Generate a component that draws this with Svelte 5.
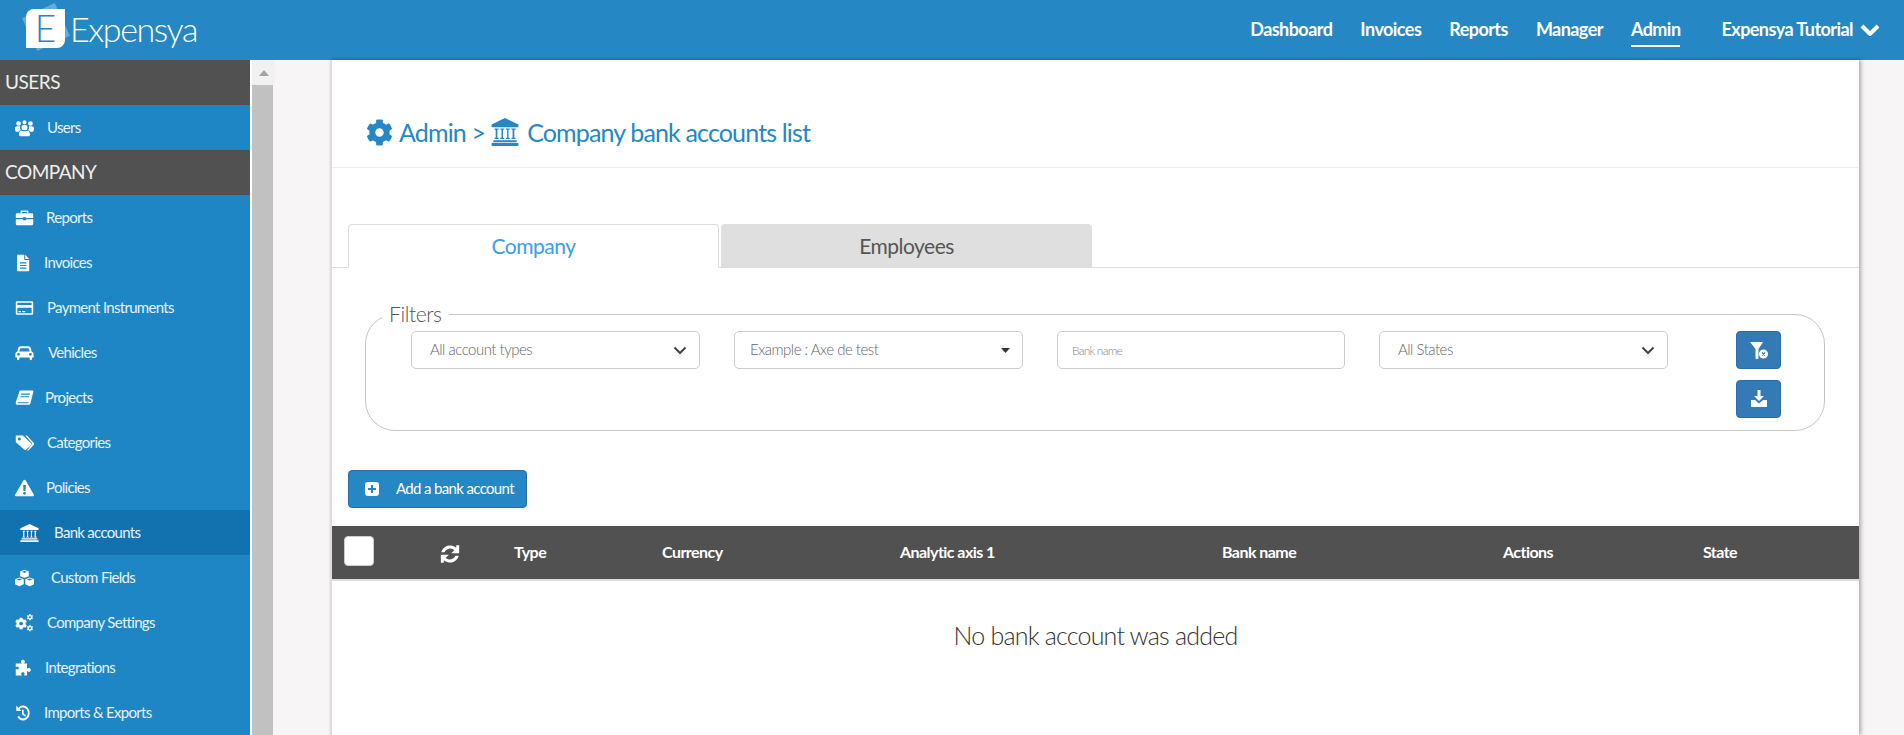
<script>
	const gear = 'M487.4 315.7l-42.6-24.6c4.3-23.2 4.3-47 0-70.2l42.6-24.6c4.9-2.8 7.1-8.6 5.5-14-11.1-35.6-30-67.8-54.7-94.6-3.8-4.1-10-5.1-14.8-2.3L380.8 110c-17.9-15.4-38.5-27.3-60.8-35.1V25.8c0-5.6-3.9-10.5-9.4-11.7-36.7-8.2-74.3-7.8-109.2 0-5.5 1.2-9.4 6.1-9.4 11.7V75c-22.2 7.9-42.8 19.8-60.8 35.1L88.7 85.5c-4.9-2.8-11-1.9-14.8 2.3-24.7 26.7-43.6 58.9-54.7 94.6-1.7 5.4.6 11.2 5.5 14L67.3 221c-4.3 23.2-4.3 47 0 70.2l-42.6 24.6c-4.9 2.8-7.1 8.6-5.5 14 11.1 35.6 30 67.8 54.7 94.6 3.8 4.1 10 5.1 14.8 2.3l42.6-24.6c17.9 15.4 38.5 27.3 60.8 35.1v49.2c0 5.6 3.9 10.5 9.4 11.7 36.7 8.2 74.3 7.8 109.2 0 5.5-1.2 9.4-6.1 9.4-11.7v-49.2c22.2-7.9 42.8-19.8 60.8-35.1l42.6 24.6c4.9 2.8 11 1.9 14.8-2.3 24.7-26.7 43.6-58.9 54.7-94.6 1.5-5.5-.7-11.3-5.6-14.1zM256 336c-44.1 0-80-35.9-80-80s35.9-80 80-80 80 35.9 80 80-35.9 80-80 80z';
	const bank = 'M12 0 .500 5.500V8h23V5.500zM3 9h3.500v1H5.500v7h1v1H3v-1h1v-7H3zm5 0h3.300v1h-1v7h1v1H8v-1h1v-7H8zm4.800 0H16v1h-1v7h1v1h-3.200v-1h1v-7h-1zm4.700 0H21v1h-1v7h1v1h-3.500v-1h1v-7h-1zM2 19h20v1.800H2zM.500 21.500h23V24H.500z';

	const icons = {
		users: 'M12 7.500a3.800 3.800 0 1 1 0 7.600 3.800 3.800 0 0 1 0-7.600zM4.500 3a3 3 0 1 1 0 6 3 3 0 0 1 0-6zM19.500 3a3 3 0 1 1 0 6 3 3 0 0 1 0-6zM12 1.500a2.700 2.700 0 1 1 0 5.400 2.700 2.700 0 0 1 0-5.400zM0 12c0-2 2-2.500 6.500-2.300-.5 2-.3 3.500 1 5-1.500.5-2.500 1.200-3 2.300H1.500C.5 17 0 15 0 12zM24 12c0-2-2-2.500-6.500-2.300.5 2 .3 3.500-1 5 1.500.5 2.500 1.200 3 2.300h3c1 0 1.500-2 1.500-5zM7.500 15.500c1 0 1.500.8 4.500.8s3.500-.8 4.500-.8c1.500 0 2.500 2.500 2.500 5.500 0 1.500-1 2-2.500 2h-9C6 23 5 22.500 5 21c0-3 1-5.500 2.500-5.500z',
		briefcase: 'M8 2h8a1 1 0 0 1 1 1v2h-2V4H9v1H7V3a1 1 0 0 1 1-1zM2.500 5.500h19A1.500 1.500 0 0 1 23 7v5H14v-1h-4v1H1V7a1.500 1.500 0 0 1 1.500-1.500zM1 13.500h9V15h4v-1.500h9V20a1.500 1.500 0 0 1-1.500 1.500h-19A1.500 1.500 0 0 1 1 20z',
		file: 'M4 1h9v7h7v14a1 1 0 0 1-1 1H4a1 1 0 0 1-1-1V2a1 1 0 0 1 1-1zm10.500 0L20 6.500h-5.500zM7 11v1.500h9V11zm0 3.500V16h9v-1.500zM7 18v1.500h9V18z',
		card: 'M2.500 3h19A1.500 1.500 0 0 1 23 4.500v15a1.500 1.500 0 0 1-1.500 1.500h-19A1.500 1.500 0 0 1 1 19.500v-15A1.500 1.500 0 0 1 2.500 3zM3 5v3h18V5zm0 6.500V19h18v-7.500zM4.500 16h3v1.500h-3zm4.500 0h4v1.500H9z',
		car: 'M7 3h10c1.500 0 2.500 1 3 2.500L21 10c1.500.5 2.500 2 2.500 3.500V18h-2v2a1.500 1.500 0 0 1-3 0v-2h-13v2a1.500 1.500 0 0 1-3 0v-2h-2v-4.500C.5 12 1.500 10.500 3 10l1-4.500C4.500 4 5.500 3 7 3zm.5 2.500C6.800 5.500 6.500 6 6.300 6.500L5.500 10h13l-.8-3.500c-.2-.5-.5-1-1.200-1zM4.500 12a1.800 1.800 0 1 0 0 3.600 1.800 1.800 0 0 0 0-3.600zm15 0a1.800 1.800 0 1 0 0 3.600 1.800 1.800 0 0 0 0-3.600z',
		book: 'M6 2h16c1 0 1.500.8 1.200 1.700L19.500 19c-.5 1.500-1 2-3 2H3.500C1.500 21 .5 19.500 1 17.500zm2 4-.4 1.500h11L19 6zm-1 3.500L6.600 11h11l.4-1.500zM3.500 17.500c-.3 1 .2 1.500 1 1.500H16c.7 0 1-.2 1.200-1l.2-.5z',
		tags: 'M1 2h9l10.500 10.500a1.500 1.500 0 0 1 0 2L14 21a1.500 1.500 0 0 1-2 0L1 11zm4.500 2.500a2 2 0 1 0 0 4 2 2 0 0 0 0-4zM13 2h2l8.500 9.500c.7.8.7 2 0 3L17 22h-2l6.500-8c.5-.6.5-1.200 0-1.800z',
		warning: 'M12 1c.6 0 1 .3 1.300.8l10.400 19c.5 1-.1 2.200-1.300 2.200H1.600C.4 23-.2 21.800.3 20.800l10.400-19C11 1.300 11.400 1 12 1zm-1.700 7 .4 8h2.600l.4-8zM12 17.300a1.800 1.800 0 1 0 0 3.600 1.800 1.800 0 0 0 0-3.600z',
		cubes: 'M12 1l5.500 2.200v6.300L12 11.800 6.500 9.500V3.200zM8.500 3.800 12 5.200l3.500-1.400L12 2.600zM5.500 11.300l5.500 2.200v6.800L5.500 23 0 20.300v-6.800zM2 13.800l3.500 1.400L9 13.800l-3.500-1.300zM18.500 11.300l5.500 2.200v6.800L18.500 23 13 20.300v-6.800zM15 13.800l3.500 1.400 3.500-1.400-3.500-1.300z',
		puzzle: 'M6 6h3c-.5-1-1-1.500-1-2.800C8 1.800 9.200 1 10.500 1S13 1.800 13 3.200C13 4.500 12.500 5 12 6h4v7c.8-.5 1.500-1 2.500-1 1.500 0 2.500 1 2.500 2.500S20 17 18.500 17c-1 0-1.700-.5-2.500-1v6h-4c.5-1 .8-1.500.8-2.300 0-1.300-1-2-2.300-2s-2.300.7-2.300 2c0 .8.300 1.300.8 2.300H1v-9c1 .5 1.500.8 2.300.8C4.500 14.800 5 13.500 5 12.500S4.500 10 3.300 10c-.8 0-1.300.4-2.300 1V6z',
		history: 'M12 2a10 10 0 1 1-8.500 15.300l2.500-1.500A7.200 7.200 0 1 0 12 4.800c-2 0-3.700.7-5 2l2.500 2.500H2V2l3 3c1.800-1.900 4.200-3 7-3zm-1.500 5.500h2.500v5l3.500 2.500-1.400 2-4.600-3.300z',
		refresh: 'M19.500 1.500H23v9.500h-9.500l3.500-3.500A7 7 0 0 0 5.500 10H1.500A11 11 0 0 1 19.500 4.500zM4.500 22.500H1V13h9.500L7 16.500A7 7 0 0 0 18.500 14h4A11 11 0 0 1 4.500 19.500z'
	};

	const menu = [
		{ title: 'USERS' },
		{ label: 'Users', icon: 'users', x: 47 },
		{ title: 'COMPANY' },
		{ label: 'Reports', icon: 'briefcase', x: 46 },
		{ label: 'Invoices', icon: 'file', x: 44, w: 17 },
		{ label: 'Payment Instruments', icon: 'card', x: 47 },
		{ label: 'Vehicles', icon: 'car', x: 48 },
		{ label: 'Projects', icon: 'book', x: 45 },
		{ label: 'Categories', icon: 'tags', x: 47 },
		{ label: 'Policies', icon: 'warning', x: 46 },
		{ label: 'Bank accounts', icon: 'bank', x: 54, active: true },
		{ label: 'Custom Fields', icon: 'cubes', x: 51 },
		{ label: 'Company Settings', icon: 'cogs', x: 47 },
		{ label: 'Integrations', icon: 'puzzle', x: 45, w: 18 },
		{ label: 'Imports & Exports', icon: 'history', x: 44, w: 16 }
	];

	const nav = ['Dashboard', 'Invoices', 'Reports', 'Manager', 'Admin'];
	const columns = ['Type', 'Currency', 'Analytic axis 1', 'Bank name', 'Actions', 'State'];
</script>

<div class="topbar">
	<div class="logo">
		<span class="logo-back"></span>
		<span class="logo-mark">E</span>
		<span class="logo-text">Expensya</span>
	</div>
	<nav class="nav">
		{#each nav as item}
			<a href="#top" class:current={item === 'Admin'}>{item}</a>
		{/each}
		<a href="#top" class="account">
			Expensya Tutorial
			<svg width="20" height="14" viewBox="0 0 20 14"><path d="M2 4l8 8 8-8" fill="none" stroke="#fff" stroke-width="4"/></svg>
		</a>
	</nav>
</div>

<div class="layout">
	<aside class="sidebar">
		{#each menu as row}
			{#if row.title}
				<div class="group">{row.title}</div>
			{:else}
				<div class="item" class:active={row.active}>
					<span class="item-icon" style="width: {row.x - (row.active ? 20 : 15)}px">
						{#if row.icon === 'cogs'}
							<svg width="19" height="18" viewBox="0 0 760 720" fill="#fff">
								<path d={gear} transform="translate(0 140) scale(.95)"/>
								<path d={gear} transform="translate(470 0) scale(.5)"/>
								<path d={gear} transform="translate(470 440) scale(.5)"/>
							</svg>
						{:else if row.icon === 'bank'}
							<svg width="19" height="18" viewBox="0 0 24 24" fill="#fff" preserveAspectRatio="none"><path d={bank}/></svg>
						{:else}
							<svg width={row.w ?? 19} height="18" viewBox="0 0 24 24" fill="#fff" fill-rule="evenodd" preserveAspectRatio="none"><path d={icons[row.icon]}/></svg>
						{/if}
					</span>
					<span class="item-label">{row.label}</span>
				</div>
			{/if}
		{/each}
	</aside>

	<div class="scrollbar">
		<div class="scroll-up"><span></span></div>
		<div class="scroll-thumb"></div>
	</div>

	<main class="card">
		<header class="page-title">
			<h1>
				<svg class="gear" width="27" height="27" viewBox="0 0 512 512" fill="#2587c4"><path d={gear}/></svg>
				<span>Admin &gt;</span>
				<svg class="bank" width="30" height="28" viewBox="0 0 24 24" fill="#2587c4"><path d={bank}/></svg>
				<span>Company bank accounts list</span>
			</h1>
		</header>

		<div class="tabs">
			<div class="tab selected">Company</div>
			<div class="tab">Employees</div>
		</div>

		<fieldset class="filters">
			<legend>Filters</legend>
			<div class="filter-grid">
				<div class="field select">
					<span>All account types</span>
					<svg width="14" height="9" viewBox="0 0 14 9"><path d="M1.500 1.500 7 7l5.500-5.500" fill="none" stroke="#444" stroke-width="2"/></svg>
				</div>
				<div class="field select dropdown">
					<span>Example : Axe de test</span>
					<svg width="9" height="5" viewBox="0 0 9 5"><path d="M0 0h9L4.500 5z" fill="#333"/></svg>
				</div>
				<input class="field" type="text" placeholder="Bank name" />
				<div class="field select">
					<span>All States</span>
					<svg width="14" height="9" viewBox="0 0 14 9"><path d="M1.500 1.500 7 7l5.500-5.500" fill="none" stroke="#444" stroke-width="2"/></svg>
				</div>
				<div class="tools">
					<button class="tool" aria-label="Clear filters">
						<svg width="20" height="19" viewBox="0 0 20 19" fill="#fff">
							<path d="M1 1h13L9.500 8v9c0 1.500-3 1.500-3 0V8z"/>
							<circle cx="14.500" cy="13" r="4.500"/>
							<path d="M13 11.500l3 3m0-3-3 3" stroke="#337ab7" stroke-width="1.200"/>
						</svg>
					</button>
					<button class="tool" aria-label="Export">
						<svg width="16" height="18" viewBox="0 0 16 18" fill="#fff">
							<path d="M6.500 0h3v6H13L8 11 3 6h3.500zM0 10h4l4 3.500 4-3.500h4v7H0z"/>
						</svg>
					</button>
				</div>
			</div>
		</fieldset>

		<button class="add">
			<svg width="14" height="14" viewBox="0 0 14 14"><rect width="14" height="14" rx="3" fill="#fff"/><path d="M7 3v8M3 7h8" stroke="#2587c4" stroke-width="2"/></svg>
			<span>Add a bank account</span>
		</button>

		<div class="table-head">
			<span class="checkbox"></span>
			<svg class="refresh" width="20" height="20" viewBox="0 0 24 24" fill="#fff"><path d={icons.refresh}/></svg>
			{#each columns as col}
				<span>{col}</span>
			{/each}
		</div>

		<p class="empty">No bank account was added</p>
	</main>
</div>

<style>
	:global(body) {
		margin: 0;
		height: 735px;
		overflow: hidden;
		background: #f7f5f6;
		font-family: Lato, "Liberation Sans", sans-serif;
	}
	.topbar {
		height: 60px;
		background: #2587c4;
		display: flex;
		align-items: center;
		justify-content: space-between;
		color: #fff;
	}
	.logo {
		position: relative;
		display: flex;
		align-items: center;
		padding-left: 26px;
		height: 60px;
	}
	.logo-back {
		position: absolute;
		left: 28px;
		top: 9px;
		width: 36px;
		height: 36px;
		background: rgba(255, 255, 255, 0.3);
		transform: rotate(-25deg);
	}
	.logo-mark {
		position: relative;
		width: 39px;
		height: 39px;
		background: #fff;
		border-radius: 8px 0 8px 0;
		color: #2587c4;
		font-weight: 300;
		font-size: 37px;
		line-height: 38px;
		text-align: center;
		margin-top: -3px;
	}
	.logo-text {
		font-weight: 300;
		font-size: 34px;
		margin-left: 5px;
		margin-top: -3px;
		letter-spacing: -1.4px;
	}
	.nav {
		display: flex;
		align-items: center;
		height: 60px;
		padding-right: 24px;
		gap: 28px;
		font-size: 18px;
		font-weight: 700;
		letter-spacing: -0.55px;
	}
	.nav a {
		color: #fff;
		text-decoration: none;
		padding: 6px 0 5px;
		border-bottom: 2px solid transparent;
		margin-top: -1px;
	}
	.nav a.current {
		border-bottom-color: #fff;
	}
	.nav .account {
		display: flex;
		align-items: center;
		gap: 7px;
		margin-left: 13px;
	}
	.layout {
		display: flex;
		height: 675px;
	}
	.sidebar {
		width: 250px;
		flex: none;
		background: #1f86c5;
		border-right: 2px solid #fff;
		overflow: hidden;
		color: #e6f1f9;
	}
	.group {
		height: 45px;
		line-height: 43px;
		background: #515151;
		padding-left: 5px;
		font-size: 19px;
		letter-spacing: -0.5px;
		color: #eee;
	}
	.item {
		display: flex;
		align-items: center;
		height: 45px;
		padding-left: 15px;
		font-size: 15px;
		letter-spacing: -0.7px;
	}
	.item-label {
		padding-bottom: 2px;
	}
	.item.active {
		background: #1272b0;
		padding-left: 20px;
	}
	.item-icon {
		display: flex;
		flex: none;
		align-items: center;
	}
	.scrollbar {
		width: 23px;
		flex: none;
	}
	.scroll-up {
		height: 25px;
		background: #f1f1f1;
		display: flex;
		align-items: center;
		justify-content: center;
	}
	.scroll-up span {
		width: 0;
		height: 0;
		border-left: 5.5px solid transparent;
		border-right: 5.5px solid transparent;
		border-bottom: 6px solid #a3a3a3;
	}
	.scroll-thumb {
		width: 21px;
		height: 650px;
		background: #c1c1c1;
	}
	.card {
		width: 1529px;
		margin-left: 55px;
		height: 675px;
		background: #fff;
		border-left: 2px solid #ddd;
		box-sizing: border-box;
		box-shadow: 2px 0 4px rgba(0, 0, 0, 0.3);
		overflow: hidden;
	}
	.page-title {
		height: 108px;
		border-bottom: 1px solid #eee;
		box-sizing: border-box;
		padding: 55px 0 0 34px;
	}
	h1 {
		margin: 0;
		display: flex;
		align-items: center;
		font-size: 25px;
		font-weight: 400;
		letter-spacing: -0.85px;
		line-height: 34px;
		color: #2587c4;
	}
	.gear {
		margin-right: 6px;
	}
	h1 .bank {
		margin: 0 7px 0 5px;
	}
	.tabs {
		display: flex;
		gap: 2px;
		margin-top: 56px;
		padding-left: 16px;
		border-bottom: 1px solid #ddd;
		height: 43px;
	}
	.tab {
		width: 371px;
		height: 43px;
		box-sizing: border-box;
		background: #dfdfdf;
		border-radius: 4px 4px 0 0;
		text-align: center;
		line-height: 44px;
		font-size: 21px;
		letter-spacing: -0.5px;
		color: #555;
	}
	.tab.selected {
		background: #fff;
		border: 1px solid #ddd;
		border-bottom: 1px solid #fff;
		height: 44px;
		color: #3b9ee8;
		line-height: 42px;
	}
	.filters {
		margin: 35px 34px 0 33px;
		padding: 0 0 12px 0;
		height: 128px;
		box-sizing: border-box;
		border: 1px solid #c5c5c5;
		border-radius: 30px;
		min-width: 0;
	}
	legend {
		margin-left: 16px;
		padding: 0 7px;
		font-size: 21px;
		font-weight: 300;
		letter-spacing: -0.4px;
		line-height: 22px;
		color: #555;
	}
	.filter-grid {
		display: grid;
		grid-template-columns: 289px 289px 288px 289px 45px;
		column-gap: 34px;
		padding-left: 45px;
		margin-top: 6px;
	}
	.filter-grid .tools {
		margin-left: 34px;
		display: flex;
		flex-direction: column;
		gap: 11px;
	}
	.field {
		height: 38px;
		box-sizing: border-box;
		width: 100%;
		border: 1px solid #ccc;
		border-radius: 5px;
		background: #fff;
		font: inherit;
		font-size: 15px;
		font-weight: 300;
		letter-spacing: -0.5px;
		color: #666;
		padding: 0 12px 0 18px;
		outline: none;
	}
	.select {
		display: flex;
		align-items: center;
		justify-content: space-between;
	}
	.select span {
		padding-bottom: 2px;
	}
	.dropdown {
		padding-left: 15px;
	}
	input.field {
		font-size: 12px;
		letter-spacing: -0.8px;
		padding-left: 14px;
	}
	input::placeholder {
		color: #888;
	}
	.tool {
		width: 45px;
		height: 38px;
		padding: 0;
		border: 1px solid #2e6da4;
		border-radius: 4px;
		background: #337ab7;
		display: flex;
		align-items: center;
		justify-content: center;
	}
	.add {
		display: flex;
		align-items: center;
		gap: 17px;
		height: 38px;
		width: 179px;
		margin: 39px 0 0 16px;
		padding: 0 0 0 16px;
		border: 1px solid #2e6da4;
		border-radius: 4px;
		background: #2587c4;
		color: #fff;
		font: inherit;
		font-size: 15px;
		letter-spacing: -0.65px;
		white-space: nowrap;
	}
	.add span {
		padding-bottom: 3px;
	}
	.table-head {
		display: grid;
		grid-template-columns: 108px 74px 148px 238px 322px 281px 200px 1fr;
		align-items: center;
		height: 50px;
		padding-bottom: 3px;
		margin-top: 18px;
		background: #515151;
		border-bottom: 2px solid #ddd;
		color: #fff;
		font-size: 16px;
		font-weight: 700;
		letter-spacing: -0.55px;
	}
	.refresh {
		margin-top: 5px;
	}
	.checkbox {
		width: 30px;
		height: 30px;
		margin-left: 12px;
		background: #fff;
		border-radius: 4px;
		border: 1px solid #ccc;
		box-sizing: border-box;
	}
	.empty {
		margin: 39px 0 0;
		text-align: center;
		font-size: 25px;
		font-weight: 300;
		letter-spacing: -0.8px;
		color: #333;
	}
</style>
